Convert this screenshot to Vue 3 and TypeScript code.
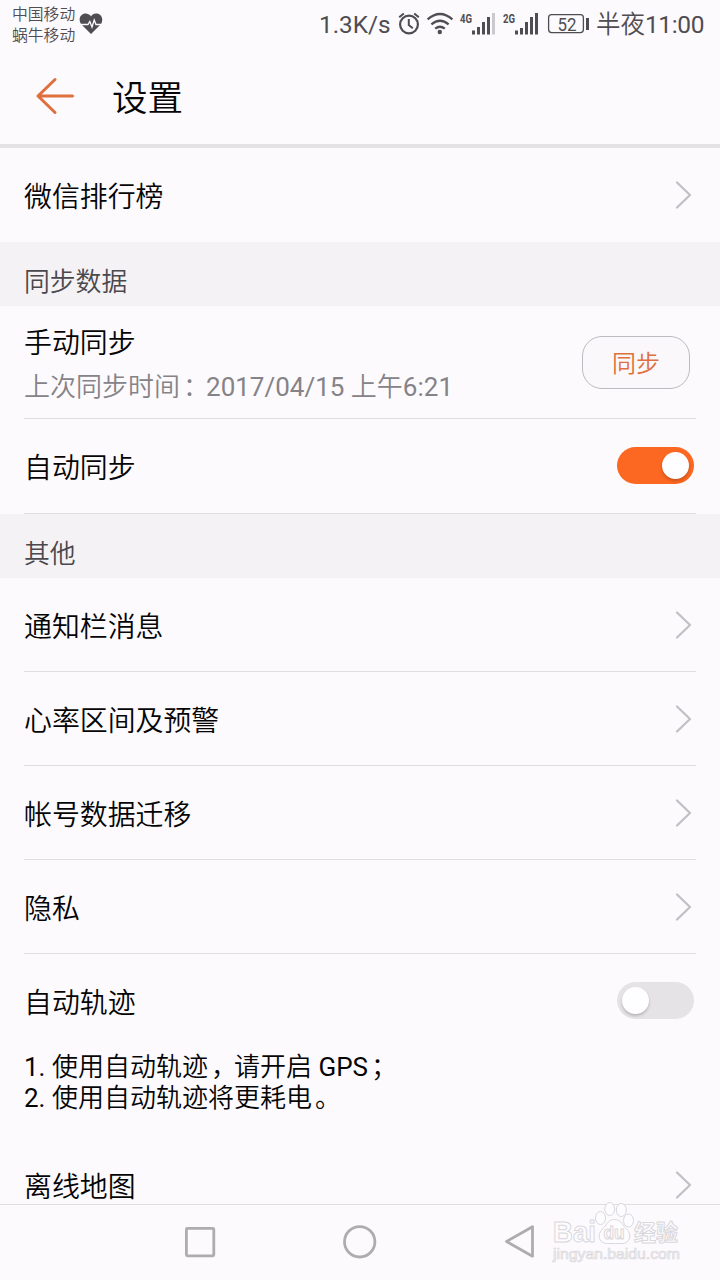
<script setup lang="ts">
import { ref } from 'vue'

const links: string[] = ['通知栏消息', '心率区间及预警', '帐号数据迁移', '隐私']
const autoSync = ref<boolean>(true)
const autoTrack = ref<boolean>(false)
</script>

<template>
  <main class="screen">
    <div class="status">
      <div class="carriers"><span>中国移动</span><span>蜗牛移动</span></div>
      <svg class="heart" width="24" height="22" viewBox="0 0 24 22">
        <path d="M12 21 2.2 11.2C-2 5 3-.5 8 .7c2 .4 3.300 1.500 4 2.700C13 1.600 15 .4 17.200.5c5 0 8 5.500 4.600 10.700Z" fill="#504d52" />
        <path d="M2 11.500h7l1.800-3 2.200 5.500 2.200-7 1.800 4.500H22" fill="none" stroke="#fcfafd" stroke-width="1.300" />
      </svg>
      <span class="speed">1.3K/s</span>
      <svg class="indicators" width="190" height="32" viewBox="396 8 190 32" fill="none" stroke="#504d52">
        <circle cx="409" cy="24.500" r="8.900" stroke-width="2.200" />
        <path d="M408.800 19v6l4 3.200M399.200 17.300l4.600-3.800M418.800 17.300l-4.600-3.800" stroke-width="2" />
        <path d="M427.600 19.300Q440 8.800 452.400 19.300M431.400 24.300q8.600-7 17.200 0M435.200 28.600q4.800-3.600 9.600 0" stroke-width="2.300" />
        <circle cx="439.800" cy="32" r="2.200" fill="#504d52" stroke="none" />
        <path d="M473.500 30.500v4M478.500 27v7.500M483.500 22v12.500M488.500 17v17.500" stroke-width="3" />
        <path d="M493.500 13v21.500" stroke="#cbc9cd" stroke-width="3" />
        <path d="M516.500 30.500v4M521.500 28v6.500M526.500 22v12.500M531.500 17v17.500M536.500 13v21.500" stroke-width="3" />
        <rect x="548.600" y="14.600" width="34.800" height="18" rx="3" stroke-width="1.300" />
        <g fill="#504d52" stroke="none">
          <text class="net" x="460" y="22.500" textLength="12" lengthAdjust="spacingAndGlyphs">4G</text>
          <text class="net" x="503" y="22.500" textLength="12" lengthAdjust="spacingAndGlyphs">2G</text>
          <text class="percent" x="557.500" y="30.500" textLength="19" lengthAdjust="spacingAndGlyphs">52</text>
        </g>
      </svg>
      <i class="battery-cap"></i>
      <span class="clock">半夜<span class="latin">11:00</span></span>
    </div>

    <header class="header">
      <svg width="40" height="40" viewBox="0 0 40 40" fill="none" stroke="#df6f3c" stroke-width="3" stroke-linecap="round" stroke-linejoin="round">
        <path d="M20 3.500 3 20 20 36.500M3 20H37.500" />
      </svg>
      <h1>设置</h1>
    </header>

    <div class="content">
      <div class="row plain">
        <span class="label">微信排行榜</span>
        <svg class="chevron" width="20" height="30" viewBox="0 0 20 30"><path d="M3 2.500 16 15 3 27.500" /></svg>
      </div>
      <h2>同步数据</h2>
      <div class="row tall">
        <div class="pair">
          <span class="label">手动同步</span>
          <span class="detail">上次同步时间<span class="mark">：</span><span class="latin">2017/04/15 </span>上午<span class="latin">6:21</span></span>
        </div>
        <button class="sync">同步</button>
      </div>
      <div class="row auto">
        <span class="label">自动同步</span>
        <span class="switch" :class="{ on: autoSync }" @click="autoSync = !autoSync"><i></i></span>
      </div>
      <h2>其他</h2>
      <div v-for="name in links" :key="name" class="row">
        <span class="label">{{ name }}</span>
        <svg class="chevron" width="20" height="30" viewBox="0 0 20 30"><path d="M3 2.500 16 15 3 27.500" /></svg>
      </div>
      <div class="row plain">
        <span class="label">自动轨迹</span>
        <span class="switch" :class="{ on: autoTrack }" @click="autoTrack = !autoTrack"><i></i></span>
      </div>
      <div class="note">
        <span><span class="latin">1. </span>使用自动轨迹<span class="mark">，</span>请开启<span class="latin"> GPS</span><span class="mark">；</span></span>
        <span><span class="latin">2. </span>使用自动轨迹将更耗电<span class="mark">。</span></span>
      </div>
      <div class="row plain">
        <span class="label">离线地图</span>
        <svg class="chevron" width="20" height="30" viewBox="0 0 20 30"><path d="M3 2.500 16 15 3 27.500" /></svg>
      </div>
    </div>

    <nav class="nav">
      <svg width="720" height="76" viewBox="0 1204 720 76" fill="none" stroke="#afacb0" stroke-width="2.800" stroke-linejoin="round">
        <rect x="186.400" y="1228.400" width="27.400" height="27.400" rx="1" />
        <circle cx="359.700" cy="1241.800" r="15.200" />
        <path d="M532.500 1226.800v29.400L506.500 1241.500Z" />
      </svg>
    </nav>
    <svg class="watermark" width="140" height="70" viewBox="548 1198 140 70" fill="#fdfcfe" stroke="#d9d7db" stroke-width="1">
      <text class="brand" x="553" y="1242" textLength="43" lengthAdjust="spacingAndGlyphs">Bai</text>
      <ellipse cx="600.500" cy="1218" rx="5" ry="6.500" />
      <ellipse cx="609.700" cy="1209" rx="5" ry="6.500" />
      <ellipse cx="621.300" cy="1210" rx="5" ry="6.500" />
      <ellipse cx="628.500" cy="1220.500" rx="5" ry="6.500" />
      <path d="M614.500 1219.500c6 0 7.500 4.500 10.500 8 4 4 6 7 4 12-2.500 5-8 4-14.500 4s-12 1-14.500-4c-2-5 0-8 4-12 3-3.500 4.500-8 10.500-8Z" />
      <text class="du" x="603.500" y="1239" textLength="21" lengthAdjust="spacingAndGlyphs">du</text>
      <text class="exp" x="634" y="1241" textLength="44" lengthAdjust="spacingAndGlyphs">经验</text>
      <text class="url" x="553" y="1259" textLength="127" lengthAdjust="spacingAndGlyphs">jingyan.baidu.com</text>
    </svg>
  </main>
</template>

<style>
body {
  margin: 0;
  background: #fcfafd;
}
</style>

<style scoped>
.screen {
  position: relative;
  display: flex;
  flex-direction: column;
  width: 720px;
  height: 1280px;
  overflow: hidden;
  background: #fcfafd;
  color: #050505;
  font-family: Roboto, "Noto Sans CJK SC", sans-serif;
  font-weight: 350;
}
.latin {
  font-weight: 400;
  white-space: pre;
}
.status {
  display: flex;
  flex: none;
  height: 48px;
  color: #504d52;
}
.carriers {
  display: flex;
  flex-direction: column;
  width: 66px;
  padding: 4px 0 0 12px;
  font-size: 15.8px;
  line-height: 21px;
  white-space: nowrap;
}
.heart { margin: 13px 0 0 1px; }
.speed {
  width: 78px;
  margin: 9px 0 0 216px;
  font-size: 24.3px;
  line-height: 32px;
  font-weight: 400;
  white-space: nowrap;
}
.indicators { flex: none; margin: 8px 0 0 -1px; }
.net { font: 700 12.500px Roboto, sans-serif; }
.percent { font: 400 18px Roboto, sans-serif; }
.battery-cap {
  width: 3px;
  height: 12px;
  margin: 18px 0 0 0;
  background: #504d52;
}
.clock {
  margin: 9px 0 0 7px;
  font-size: 24.5px;
  line-height: 32px;
  white-space: nowrap;
}
.clock .latin { letter-spacing: -0.4px; }
.header {
  display: flex;
  flex: none;
  align-items: center;
  box-sizing: border-box;
  height: 100px;
  padding-left: 35px;
  border-bottom: 4px solid #e4e2e5;
}
.header h1 {
  margin: 6px 0 0 37px;
  font-size: 35.5px;
  line-height: 48px;
  font-weight: 350;
}
.content {
  flex: 1;
  min-height: 0;
  overflow: hidden;
}
.row {
  display: flex;
  align-items: center;
  justify-content: space-between;
  box-sizing: border-box;
  height: 94px;
  margin: 0 24px;
  border-bottom: 1px solid #e0dee1;
}
.row.plain { border-bottom-color: transparent; }
.row.tall { height: 113px; }
.row.auto { height: 95px; }
.label {
  padding-top: 6px;
  font-size: 27.9px;
  line-height: 40px;
}
.chevron {
  margin-right: 2px;
  fill: none;
  stroke: #c2c0c4;
  stroke-width: 2.3;
  stroke-linecap: round;
  stroke-linejoin: round;
}
.content h2 {
  box-sizing: border-box;
  height: 64px;
  margin: 0;
  padding: 20px 24px 0;
  background: #f4f2f5;
  color: #4a484c;
  font-size: 25.8px;
  line-height: 40px;
  font-weight: 350;
}
.pair {
  display: flex;
  flex-direction: column;
  padding-top: 5px;
}
.pair .label { padding: 0; line-height: 44px; }
.detail {
  color: #858387;
  font-size: 26px;
  line-height: 42px;
  white-space: nowrap;
}
.mark {
  margin-right: -3px;
  padding-left: 3px;
}
.sync {
  width: 108px;
  height: 53px;
  margin: 0 6px 0 0;
  padding: 0 0 1px;
  border: 1px solid #bdbbbf;
  border-radius: 20px;
  background: #faf8fb;
  color: #df6f3c;
  font: inherit;
  font-size: 24px;
}
.switch {
  box-sizing: border-box;
  width: 77px;
  height: 37px;
  margin-right: 2px;
  padding: 5px;
  border-radius: 19px;
  background: #e5e3e6;
}
.switch i {
  display: block;
  width: 27px;
  height: 27px;
  border-radius: 50%;
  background: #fefdff;
  box-shadow: 0 2px 3px rgba(0, 0, 0, 0.2);
}
.switch.on { margin-bottom: 2px; background: #fc6721; }
.switch.on i { margin-left: auto; }
.note {
  display: flex;
  flex-direction: column;
  box-sizing: border-box;
  height: 90px;
  padding: 4px 24px 0;
  font-size: 26px;
  line-height: 31px;
  white-space: nowrap;
}
.nav {
  flex: none;
  box-sizing: border-box;
  height: 76px;
  border-top: 1px solid #e0dee1;
}
.nav svg { display: block; margin-top: -1px; }
.watermark {
  position: absolute;
  left: 548px;
  top: 1198px;
}
.brand { font: 700 30px "Liberation Sans", sans-serif; }
.du { font: 700 19px "Liberation Sans", sans-serif; }
.exp { font: 700 23px "Noto Sans CJK SC", sans-serif; }
.url { font: 400 14px "Liberation Sans", sans-serif; stroke-width: 0.7; }
</style>
